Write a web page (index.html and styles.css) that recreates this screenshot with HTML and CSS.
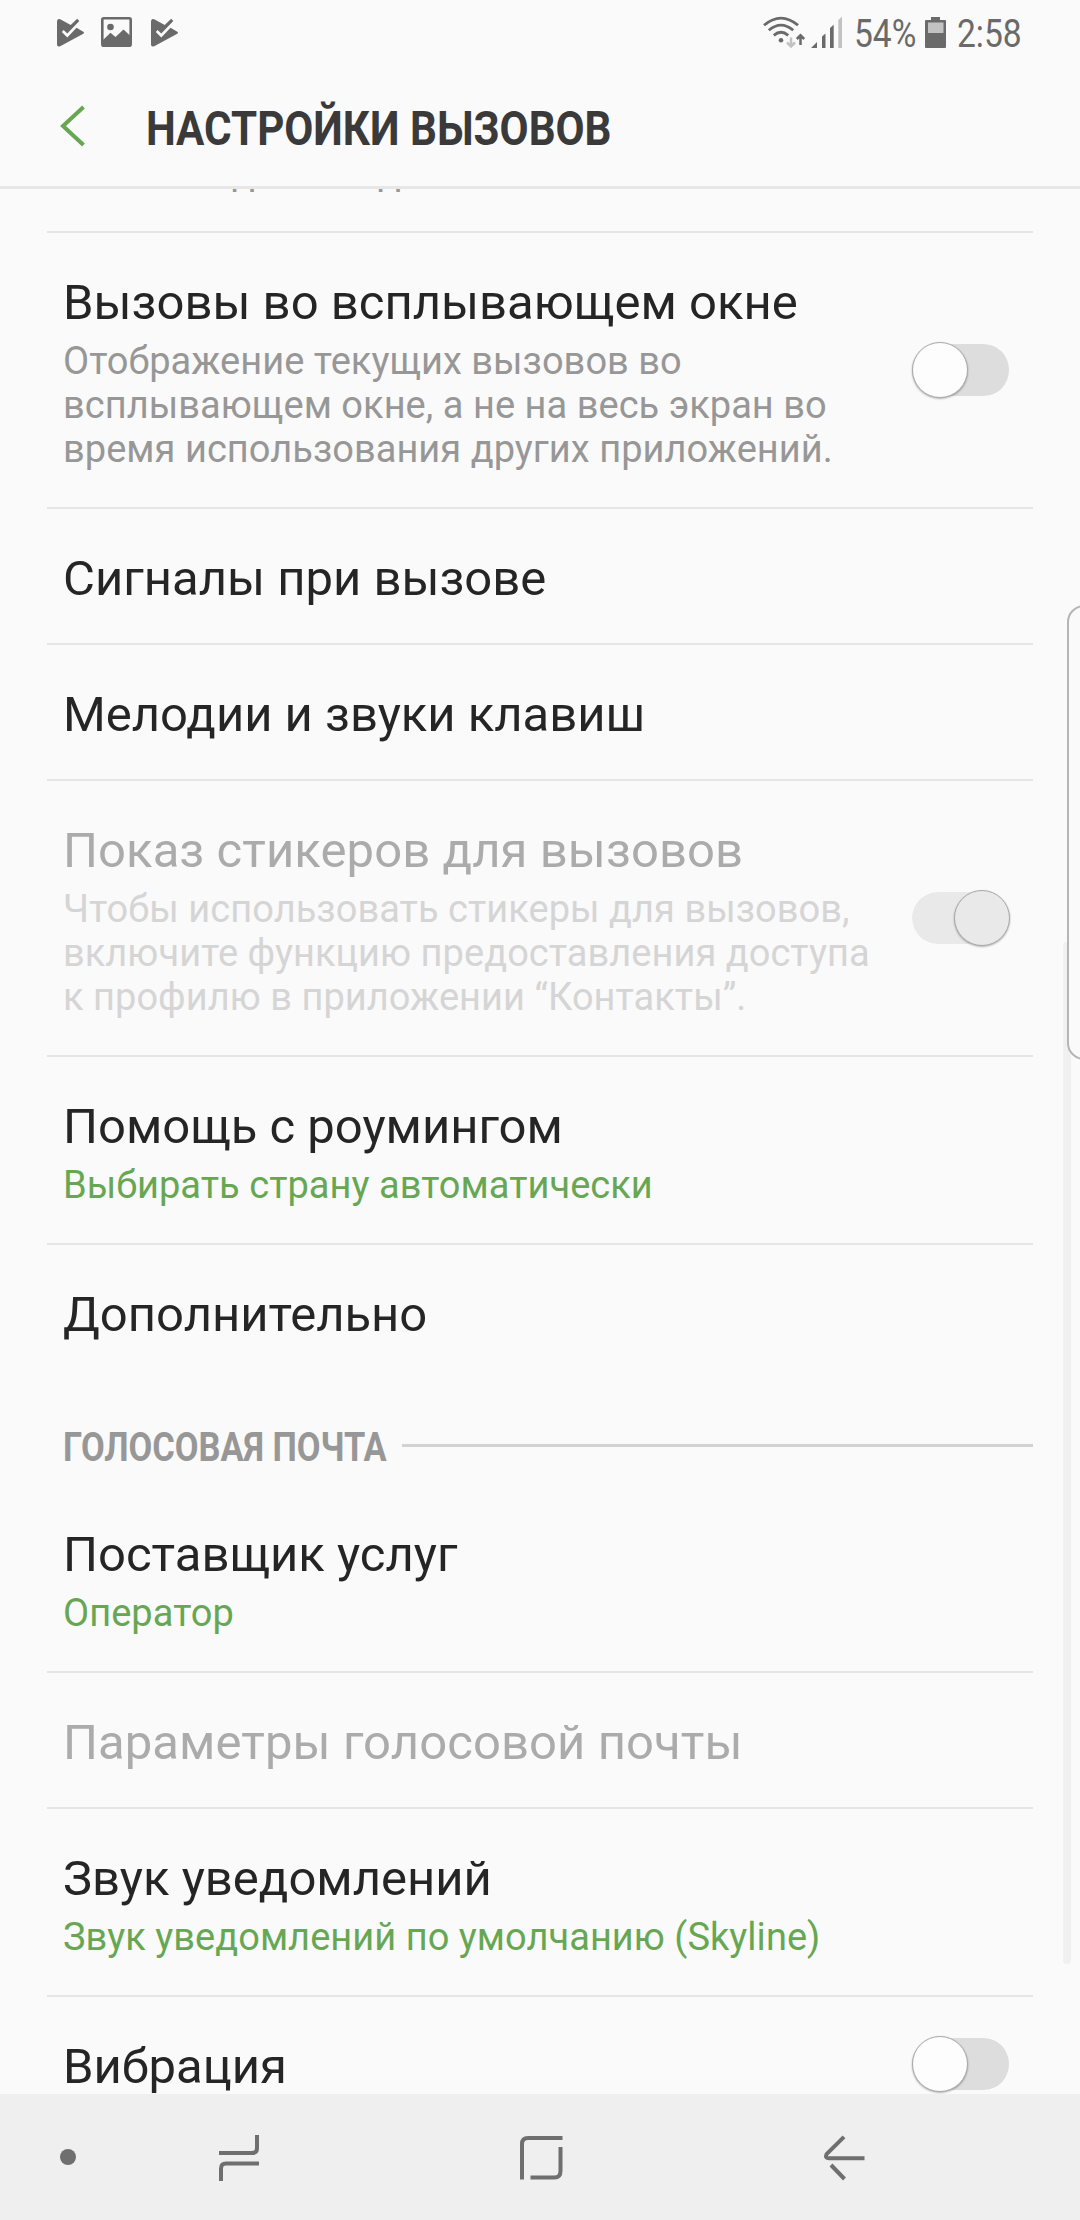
FILE: index.html
```html
<!DOCTYPE html>
<html lang="ru">

<head>
    <meta charset="UTF-8">
    <meta name="viewport" content="width=device-width, initial-scale=1.0">
    <title>Настройки вызовов</title>
    <link rel="stylesheet" href="styles.css">
</head>

<body>
    <div class="screen">
        <div class="status-bar">
            <div class="status-left">
                <svg width="28" height="32" viewBox="0 0 28 32">
                    <path fill="#6a6a6a" d="M0 5.5Q0 2 3.2 3.3L13.7 9 20.2 2.8 22.3 5 10.3 17.6 6.6 14 4.8 16 10.3 21.5 19.5 11.8 26.3 15.7Q28 16.6 26.3 17.8L3.2 30.2Q0 31.3 0 28.5Z"/>
                </svg>
                <svg width="31" height="30" viewBox="0 0 31 30">
                    <rect x="1.3" y="1.3" width="28.4" height="27.4" rx="1.5" fill="none" stroke="#6a6a6a" stroke-width="2.6"/>
                    <circle cx="9.5" cy="10" r="3.3" fill="#6a6a6a"/>
                    <path fill="#6a6a6a" d="M2 23L9.5 15.7 14.5 20 22.5 12.5 29 18.5V28H2Z"/>
                </svg>
                <svg width="28" height="32" viewBox="0 0 28 32">
                    <path fill="#6a6a6a" d="M0 5.5Q0 2 3.2 3.3L13.7 9 20.2 2.8 22.3 5 10.3 17.6 6.6 14 4.8 16 10.3 21.5 19.5 11.8 26.3 15.7Q28 16.6 26.3 17.8L3.2 30.2Q0 31.3 0 28.5Z"/>
                </svg>
            </div>
            <div class="status-right">
                <!-- wifi + signal -->
                <svg width="80" height="32" viewBox="763 16 80 32">
                    <g fill="none" stroke="#6a6a6a" stroke-width="2.8">
                        <path d="M764 25.3Q781 11 798 25.3"/>
                        <path d="M768.8 30.3Q781 20 793.2 30.3"/>
                        <path d="M773.8 35.3Q781 29.3 788.2 35.3"/>
                        <path d="M800.5 45V36M796.8 39L800.5 35.3 804.2 39" stroke-width="2.5"/>
                        <path d="M791 37.5V46M787 42.5L791 46.5 795 42.5" stroke="#c2c2c2" stroke-width="2.5"/>
                    </g>
                    <circle cx="781" cy="40.3" r="2.3" fill="#6a6a6a"/>
                    <path fill="#6a6a6a" d="M811 48L817 42V48ZM822 48V36.5L825.5 33.5V48ZM830 48V28L833.7 24.8V48Z"/>
                    <path fill="#c2c2c2" d="M838.3 48V20L842 16.5V48Z"/>
                </svg>
                <span class="status-text percent">54%</span>
                <svg width="21" height="32" viewBox="0 0 21 32">
                    <path fill="#6a6a6a" d="M6 1H15V4H20Q21 4 21 5V31Q21 32 20 32H1Q0 32 0 31V5Q0 4 1 4H6Z"/>
                    <rect x="3" y="6.5" width="15.5" height="10.5" fill="#c2c2c2"/>
                </svg>
                <span class="status-text time">2:58</span>
            </div>
        </div>

        <div class="header">
            <svg width="28" height="44" viewBox="0 0 28 44">
                <path d="M23.5 3L3 22 23.5 41" fill="none" stroke="#67a753" stroke-width="4"/>
            </svg>
            <h1>НАСТРОЙКИ ВЫЗОВОВ</h1>
        </div>

        <div class="list">
            <div class="row-cut"><span>д</span><span>д</span></div>

            <div class="row">
                <div class="text">
                    <div class="title">Вызовы во всплывающем окне</div>
                    <div class="summary">Отображение текущих вызовов во<br>всплывающем окне, а не на весь экран во<br>время использования других приложений.</div>
                </div>
                <div class="switch"><div class="thumb"></div></div>
            </div>

            <div class="row">
                <div class="title">Сигналы при вызове</div>
            </div>

            <div class="row">
                <div class="title">Мелодии и звуки клавиш</div>
            </div>

            <div class="row disabled">
                <div class="text">
                    <div class="title">Показ стикеров для вызовов</div>
                    <div class="summary">Чтобы использовать стикеры для вызовов,<br>включите функцию предоставления доступа<br>к профилю в приложении “Контакты”.</div>
                </div>
                <div class="switch on"><div class="thumb"></div></div>
            </div>

            <div class="row">
                <div class="text">
                    <div class="title">Помощь с роумингом</div>
                    <div class="summary green">Выбирать страну автоматически</div>
                </div>
            </div>

            <div class="row last">
                <div class="title">Дополнительно</div>
            </div>

            <div class="section">
                <h2>ГОЛОСОВАЯ ПОЧТА</h2>
                <div class="line"></div>
            </div>

            <div class="row">
                <div class="text">
                    <div class="title">Поставщик услуг</div>
                    <div class="summary green">Оператор</div>
                </div>
            </div>

            <div class="row disabled">
                <div class="title">Параметры голосовой почты</div>
            </div>

            <div class="row">
                <div class="text">
                    <div class="title">Звук уведомлений</div>
                    <div class="summary green">Звук уведомлений по умолчанию (Skyline)</div>
                </div>
            </div>

            <div class="row last">
                <div class="title">Вибрация</div>
                <div class="switch"><div class="thumb"></div></div>
            </div>
        </div>

        <div class="scrollbar"></div>
        <div class="edge-handle"></div>

        <div class="nav-bar">
            <div class="dot"></div>
            <svg class="recents" width="40" height="46" viewBox="0 0 40 46">
                <path d="M0 18H33Q38 18 38 13V0M40 28.5H7Q2 28.5 2 33.5V46" fill="none" stroke="#6f6f6f" stroke-width="4"/>
            </svg>
            <svg class="home" width="43" height="44" viewBox="0 0 43 44">
                <path d="M2 43.5V8Q2 2 8 2H42.5M40.5 11V35Q40.5 41.5 34.5 41.5H10.5" fill="none" stroke="#6f6f6f" stroke-width="4"/>
            </svg>
            <svg class="back" width="41" height="46" viewBox="0 0 41 46">
                <path d="M20 1.8L2.6 19.2Q0.8 23.2 4.5 23.2H40.5M7 30L20.5 44" fill="none" stroke="#6f6f6f" stroke-width="4"/>
            </svg>
        </div>
    </div>
</body>

</html>
```

FILE: styles.css
```css
* {
    box-sizing: border-box;
}

body {
    margin: 0;
    background-color: #fafafa;
    font-family: Roboto, sans-serif;
}

svg {
    display: block;
    flex-shrink: 0;
}

.screen {
    position: relative;
    display: flex;
    flex-direction: column;
    width: 1080px;
    height: 2220px;
    overflow: hidden;
}

/* status bar */
.status-bar {
    display: flex;
    justify-content: space-between;
    height: 66px;
    padding: 16px 57px 0 57px;
}

.status-left,
.status-right {
    display: flex;
    height: 32px;
}

.status-left svg:nth-child(2) {
    margin: 1px 19px 0 16px;
}

.status-text {
    font-size: 39px;
    line-height: 32px;
    color: #6a6a6a;
    white-space: nowrap;
    transform: scaleX(0.86);
    transform-origin: left;
}

.percent {
    width: 71px;
    margin-left: 11px;
    padding-top: 2px;
}

.time {
    width: 66px;
    margin-left: 11px;
    padding-top: 2px;
}

/* header */
.header {
    display: flex;
    align-items: center;
    height: 123px;
    padding: 0 0 0 60px;
    border-bottom: 3px solid #e7e7e7;
}

.header h1 {
    margin: 6px 0 0 58px;
    font-size: 49px;
    line-height: 58px;
    font-weight: 700;
    color: #3a3a3a;
    white-space: nowrap;
    transform: scaleX(0.86);
    transform-origin: left;
}

/* list */
.list {
    height: 1905px;
    padding: 0 47px;
    overflow: hidden;
}

.row-cut {
    display: flex;
    gap: 124px;
    height: 44px;
    padding-left: 185px;
    border-bottom: 2px solid #e5e5e5;
    font-size: 38px;
    line-height: 44px;
    color: #979797;
}

.row-cut span {
    width: 22px;
    margin-top: -38px;
}

.row {
    display: flex;
    align-items: center;
    justify-content: space-between;
    padding: 41px 23px 35px 16px;
    border-bottom: 2px solid #e5e5e5;
}

.row.last {
    border-bottom: none;
}

.title {
    font-size: 49px;
    line-height: 58px;
    color: #252525;
    white-space: nowrap;
}

.summary {
    margin-top: 7px;
    padding-bottom: 1px;
    font-size: 38px;
    line-height: 44px;
    letter-spacing: 0.04px;
    color: #979797;
    white-space: nowrap;
}

.summary.green {
    color: #67a753;
}

.disabled .title {
    letter-spacing: 0.08px;
    color: #ababab;
}

.disabled .summary {
    color: #d5d5d5;
}

.switch {
    flex-shrink: 0;
    width: 98px;
    height: 52px;
    margin: -25px 0 -19px;
    border-radius: 26px;
    background-color: #dddddd;
    background-clip: padding-box;
    border-right: 1px solid transparent;
}

.thumb {
    width: 56px;
    height: 56px;
    margin-top: -2px;
    border: 1px solid #a9a9a9;
    border-radius: 50%;
    background-color: #fdfdfd;
    box-shadow: 0 1px 2px rgba(0, 0, 0, 0.3);
}

.switch.on {
    background-color: #e9e9e9;
}

.switch.on .thumb {
    margin-left: 42px;
    background-color: #e9e9e9;
}

.section {
    display: flex;
    height: 106px;
    padding-left: 16px;
}

.section h2 {
    width: 339px;
    margin: 45px 0 0;
    font-size: 40px;
    line-height: 48px;
    font-weight: 700;
    color: #979797;
    white-space: nowrap;
    transform: scaleX(0.86);
    transform-origin: left;
}

.section .line {
    flex: 1;
    height: 3px;
    margin-top: 65px;
    background-color: #d2d2d2;
}

/* things over the list */
.scrollbar {
    position: absolute;
    left: 1063px;
    top: 942px;
    width: 8px;
    height: 1022px;
    border-radius: 4px;
    background-color: #f0f0f0;
}

.edge-handle {
    position: absolute;
    left: 1067px;
    top: 605px;
    width: 40px;
    height: 455px;
    border: 2px solid #b5b5b5;
    border-radius: 17px;
    background-color: #fafafa;
}

/* navigation bar */
.nav-bar {
    display: flex;
    align-items: flex-start;
    height: 126px;
    padding: 41px 0 0 60px;
    background-color: #efefef;
}

.dot {
    width: 16px;
    height: 16px;
    margin-top: 14px;
    border-radius: 50%;
    background-color: #6f6f6f;
}

.recents {
    margin-left: 143px;
}

.home {
    margin: 1px 0 0 261px;
}

.back {
    margin-left: 261px;
}
```
